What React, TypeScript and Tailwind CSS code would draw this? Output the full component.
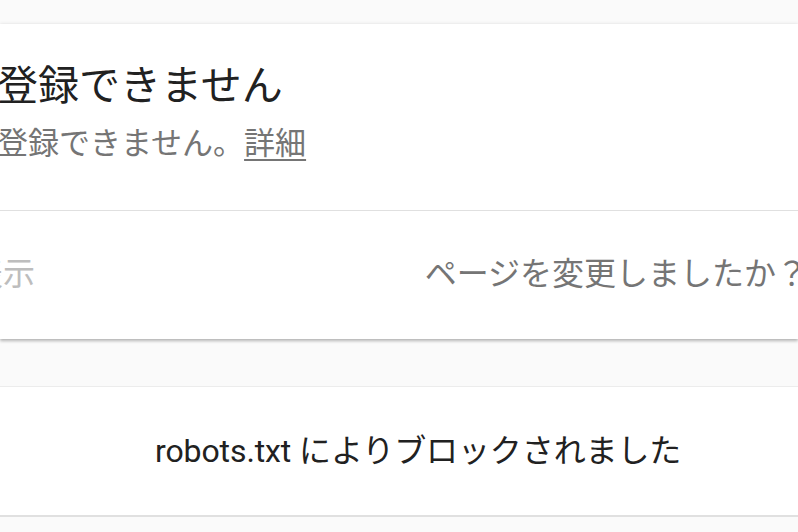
export default function App() {
  return (
    <div
      className="w-[798px] h-[532px] overflow-hidden bg-[#fafafa]"
      style={{ fontFamily: "Roboto, 'Noto Sans CJK JP', sans-serif" }}
    >
      <div className="pt-[24px]">
        <div className="bg-white shadow-[0_2px_3px_rgba(0,0,0,0.28),0_-1px_3px_rgba(0,0,0,0.06)]">
          <div className="pt-[39px] pb-[46px] border-b border-[#e0e0e0]">
            <div className="text-[41px] leading-[46px] text-[#212121] -ml-[3px] whitespace-nowrap">
              登録できません
            </div>
            <div className="mt-[15px] text-[31px] leading-[40px] text-[#757575] -ml-[3px] whitespace-nowrap">
              登録できません。<span className="underline underline-offset-[5px] decoration-[2px]">詳細</span>
            </div>
          </div>
          <div className="h-[128px] pb-[3px] flex items-center justify-between whitespace-nowrap">
            <div className="text-[32px] text-[#bdbdbd] -ml-[29px]">表示</div>
            <div className="text-[32px] text-[#757575] -mr-[10px]">ページを変更しましたか？</div>
          </div>
        </div>
        <div className="mt-[47px] bg-white border-t border-[#ececec] border-b-2 border-b-[#e0e0e0]">
          <div className="h-[128px] flex items-center pl-[155px] whitespace-nowrap text-[32px] tracking-[-0.1px] text-[#212121]">
            robots.txt によりブロックされました
          </div>
        </div>
      </div>
    </div>
  );
}
